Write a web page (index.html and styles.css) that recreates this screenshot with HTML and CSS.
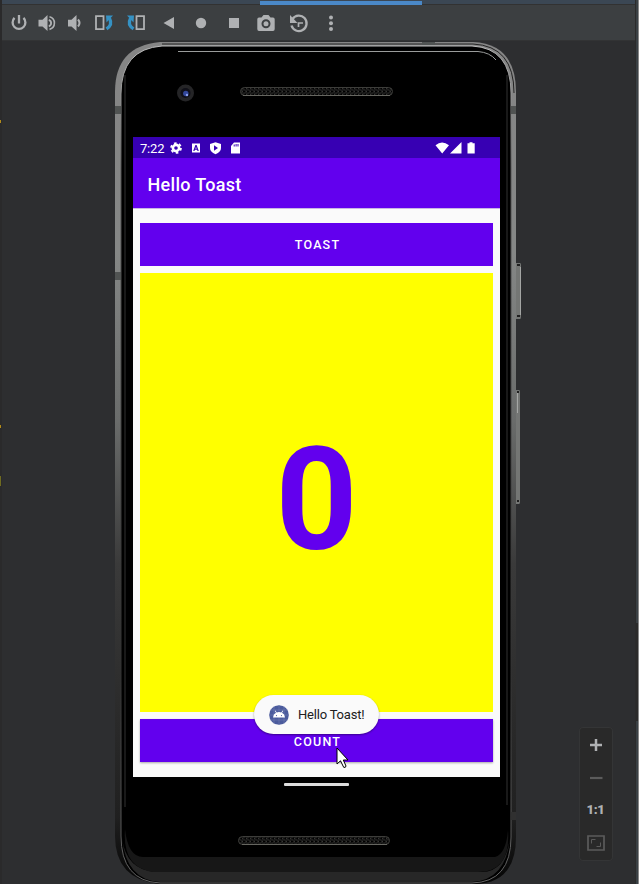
FILE: index.html
```html
<!DOCTYPE html>
<html lang="en">
<head>
<meta charset="utf-8">
<title>Emulator</title>
<link rel="stylesheet" href="styles.css">
</head>
<body>
<div class="window">
  <div class="tabs"><span class="tab-active"></span></div>
  <header class="toolbar">
    <svg viewBox="0 0 340 35" width="340" height="35">
      <g fill="none" stroke="#afb1b3" stroke-width="2.3">
        <path d="M14.500 12.900a6.400 6.400 0 1 0 9 0M19 10v8.500"/>
        <path d="M49.500 11.800a6.500 6.500 0 0 1 0 12.600" stroke-width="1.600"/>
        <path d="M48.800 14.800a3.500 3.500 0 0 1 0 6.600" stroke-width="1.800"/>
        <path d="M78 14.500q3 3.500 0 7" stroke-width="2"/>
        <path d="M96 11.200h7.500v13H96zM136.500 11.200h7.500v13h-7.500z" stroke-width="1.800"/>
        <path d="M292.500 14a7.700 7.700 0 1 1-1 6.500" stroke-width="2.300"/>
        <path d="M298.500 22v-4h4.500" stroke-width="1.700"/>
      </g>
      <g fill="#afb1b3">
        <path d="M38.500 14.800h4l5-4.800v16l-5-4.600h-4zM68 14.800h3.500l5-4.800v16l-5-4.600H68zM163.500 18l10.500-6v12z"/>
        <circle cx="201" cy="18" r="5.200"/>
        <path d="M229 13h10v10h-10zM290 10v8h7.500z"/>
        <path fill-rule="evenodd" d="M259 12.500h2.500l2-2.500h5l2 2.500h2.500q1.700 0 1.700 1.700v9.800q0 2-1.700 2h-14q-1.700 0-1.700-2v-9.800q0-1.700 1.700-1.700zM266 14.200a4.500 4.500 0 1 0 0 9a4.500 4.500 0 0 0 0-9z"/>
        <circle cx="266" cy="18.700" r="2.500"/>
        <circle cx="331" cy="12.500" r="2"/><circle cx="331" cy="18.200" r="2"/><circle cx="331" cy="24" r="2"/>
      </g>
      <g fill="none" stroke="#3592c4" stroke-width="3.200">
        <path d="M106.500 23.800q6.500-4 3-10.500M133.500 23.800q-6.500-4-3-10.500"/>
      </g>
      <path fill="#3592c4" d="M106 10.500h7l-6.500 7zM134 10.500h-7l6.500 7z"/>
    </svg>
  </header>
  <main class="canvas">
    <section class="phone">
      <svg class="frame" viewBox="115 42 407 842" width="407" height="842">
        <defs>
          <linearGradient id="rim" gradientUnits="userSpaceOnUse" x1="0" y1="42" x2="0" y2="884">
            <stop offset="0" stop-color="#858585"/><stop offset=".25" stop-color="#858786"/><stop offset=".45" stop-color="#6a6c6b"/><stop offset=".62" stop-color="#3a3a3a"/><stop offset=".92" stop-color="#202020"/><stop offset="1" stop-color="#050505"/>
          </linearGradient>
          <linearGradient id="edge" gradientUnits="userSpaceOnUse" x1="0" y1="42" x2="0" y2="884">
            <stop offset="0" stop-color="#c0c0c0"/><stop offset=".15" stop-color="#555"/><stop offset=".75" stop-color="#333"/><stop offset="1" stop-color="#666"/>
          </linearGradient>
          <pattern id="mesh" width="4" height="6" patternUnits="userSpaceOnUse" y="88.500">
            <path d="M0 1l3 2-3 2M2 0l2 1.500M2 6l2-1.500" fill="none" stroke="#42423f" stroke-width=".9"/>
          </pattern>
        </defs>
        <path fill="#747674" d="M516 263h4q1 0 1 2v52q0 2-1 2h-4zM515 390h4q1 0 1 2v110q0 2-1 2h-4z"/>
        <path fill="#a4a6a4" d="M520 267h1v48h-1zM517 393h1v20h-1z"/>
        <path fill="#202020" d="M517 264h3v2h-3zM517 315h3v2h-3zM517 391h2v2h-2zM517 500h2v2h-2z"/>
        <path fill="url(#rim)" d="M160 42h313q43 2 43 50v745q0 47-42 47H159q-44-5-44-48V92q0-46 45-50z"/>
        <path fill="#000" stroke="url(#edge)" d="M162 46h310q39 2 39 47v744q0 45-39 46H160q-39-2-39-47V94q0-45 41-48z"/>
        <path fill="none" stroke="#222" d="M162 44h311q41 2 41 49"/>
        <path fill="#272727" d="M122 838q4 42 38 44h312q34-2 38-44q-5 34-28 34H156q-30-2-34-34z"/>
        <path fill="#171717" d="M125 829q3 28 18 28h352q11-3 13-27q3 42-30 42H153q-31-4-28-43z"/>
        <path fill="#191919" d="M124 75h2v732h-2zM506 75h2v730h-2z"/>
        <path fill="none" stroke="#9a9c9b" d="M178 51.500h300q12 1 18 8.500"/>
        <path fill="#505352" d="M115 106h6v8h-6zM511 106h5v8h-5zM422 42h13v3h-13zM115 272h6v8h-6z"/>
        <path fill="#303030" d="M511 812h5v8h-5z"/>
        <circle cx="185.500" cy="93" r="8.500" fill="#252527"/><circle cx="185.500" cy="93" r="5" fill="#101018"/>
        <circle cx="185.800" cy="93.500" r="2.700" fill="#33489c"/><circle cx="187" cy="95" r="1.200" fill="#8ca0ef"/>
        <rect x="240.500" y="87.500" width="152" height="8" rx="4" fill="url(#mesh)" stroke="#3d3d3a"/>
        <rect x="238.500" y="836.500" width="151" height="8" rx="4" fill="url(#mesh)" stroke="#3d3d3a"/>
        <path stroke="#666660" d="M243 95.500h147M242 844.500h145"/>
      </svg>
      <div class="screen">
        <div class="status">
          <span class="time">7:22</span>
          <svg class="notices" viewBox="0 0 76 16" width="76" height="16" fill="#fff">
            <circle cx="8" cy="8" r="3.100" fill="none" stroke="#fff" stroke-width="2.600"/>
            <circle cx="8" cy="8" r="4.900" fill="none" stroke="#fff" stroke-width="1.900" stroke-dasharray="2.560 2.560"/>
            <path fill-rule="evenodd" d="M24 3.500h8v9h-8zM27.400 5l-2.200 6h1.300l.4-1.200h2.200l.4 1.200h1.300L28.600 5zM28 6.800l.6 1.900h-1.200z"/>
            <path fill-rule="evenodd" d="M47.500 2.200L53 4v4q0 4-5.500 6.200Q42 12 42 8V4zM46 5.200v5.600l4-2.800z"/>
            <path fill-rule="evenodd" d="M66 2.500h6v11h-9V6zM65.700 4.500v2h1v-2zm1.900-.5v2.500h1V4zm1.900 0v2.500h1V4z"/>
          </svg>
          <svg class="signals" viewBox="0 0 42 14" width="42" height="14" fill="#fff">
            <path d="M.5 4.200q6.500-5.500 13.500 0L7.200 12.500zM26.500 1v11.500H15zM32.500 2.300h2V1.300h3v1h2.200v10.200h-7.200z"/>
          </svg>
        </div>
        <div class="appbar">Hello Toast</div>
        <div class="content">
          <div class="btn">TOAST</div>
          <div class="counter">0</div>
          <div class="btn btn-count">COUNT</div>
        </div>
        <div class="toast">
          <svg viewBox="0 0 20 20" width="20" height="20">
            <circle cx="10" cy="10" r="9.800" fill="#4b5b9d"/>
            <path d="M5 1v18M10 0v20M15 1v18M1 5h18M0 10h20M1 15h18" stroke="#7480b2" stroke-width=".5"/>
            <path fill="#fff" d="M4 12.500q.3-3.500 3-4.700L5.800 5.900l.6-.4 1.300 2q2.300-.8 4.600 0l1.300-2 .6.400L13 7.800q2.700 1.200 3 4.700z"/>
            <circle cx="7.500" cy="10.600" r=".6" fill="#4b5b9d"/><circle cx="12.500" cy="10.600" r=".6" fill="#4b5b9d"/>
          </svg>
          <span>Hello Toast!</span>
        </div>
        <svg class="pointer" viewBox="0 0 13 22" width="13" height="22">
          <path d="M1 1v16l3.500-3.200 3.200 6.500q2 .8 2.300-1.300l-2.700-6H12z" fill="#fff" stroke="#000"/>
        </svg>
      </div>
      <div class="home"></div>
    </section>
  </main>
  <aside class="zoom">
    <svg viewBox="0 0 34 134" width="34" height="134">
      <path d="M17 12v12M11 18h12" stroke="#afb1b3" stroke-width="2.500"/>
      <path d="M11 51h12.500" stroke="#5b5b5b" stroke-width="2.200"/>
      <path d="M9 109h16v14H9z" fill="none" stroke="#5b5b5b" stroke-width="1.700"/>
      <path d="M12.500 116.500v-4h4M21.500 115.500v4h-4" fill="none" stroke="#5b5b5b"/>
    </svg>
    <span class="ratio">1:1</span>
  </aside>
  <div class="gutter"><i class="m1"></i><i class="m2"></i><i class="m3"></i></div>
  <div class="rail"></div>
</div>
</body>
</html>
```
FILE: styles.css
```css
* { box-sizing: border-box; }
body { margin: 0; overflow: hidden; font-family: Roboto, sans-serif; }
svg { display: block; }
.window { position: relative; width: 639px; height: 884px; background: #2d2e30; overflow: hidden; display: flex; flex-direction: column; }
.tabs { height: 5px; background: #3b4754; border-bottom: 1px solid #323232; padding: 1px 0 0 260px; flex: none; }
.tab-active { display: block; width: 162px; height: 4px; background: #4a88c7; }
.toolbar { height: 36px; background: #3c3f41; border-bottom: 1px solid #323334; flex: none; }
.canvas { padding: 1px 0 0 115px; }
.phone { position: relative; width: 401px; height: 842px; padding: 95px 0 0 18px; }
.frame { position: absolute; left: 0; top: 0; }
.screen { position: relative; width: 367px; height: 640px; background: #fafafa; display: flex; flex-direction: column; }
.status { height: 21px; background: #3700b3; color: #fff; display: flex; align-items: center; padding: 1px 23px 0 7px; }
.time { width: 28px; font-size: 13px; letter-spacing: -.2px; line-height: 20px; padding-top: 1px; }
.signals { margin-left: auto; }
.appbar { height: 51px; background: #6200ee; color: #fff; font-size: 18px; font-weight: 500; line-height: 53px; padding-left: 14.500px; letter-spacing: .3px; border-bottom: 1px solid #c9b6e4; }
.content { flex: 1; display: flex; flex-direction: column; gap: 7px; padding: 14px 7px 15px; }
.btn { height: 43px; flex: none; background: #6200ee; color: #fff; font-size: 12.500px; font-weight: 500; letter-spacing: 1.200px; line-height: 44px; text-align: center; padding-left: 2px; }
.btn-count { line-height: 46px; box-shadow: 0 1px 2px #0005; }
.counter { flex: 1; min-height: 0; background: #ff0; color: #6200ee; display: flex; align-items: center; justify-content: center; font-size: 143px; font-weight: 700; line-height: 1; padding-top: 15px; }
.toast { position: absolute; left: 121px; top: 558px; width: 125px; height: 39px; border-radius: 20px; background: #fafafa; display: flex; align-items: center; gap: 9.500px; padding-left: 14.500px; font-size: 13px; letter-spacing: -.2px; color: #202020; white-space: nowrap; box-shadow: 0 1px 2px #0006; }
.pointer { position: absolute; left: 203px; top: 610px; }
.home { position: relative; width: 65px; height: 3px; margin: 6px 0 0 151px; border-radius: 1px; background: #ddd; }
.zoom { position: absolute; left: 579px; top: 727px; width: 34px; height: 134px; background: #292929; border-radius: 4px; box-shadow: inset 0 0 0 1px #343536; }
.ratio { position: absolute; left: 0; top: 75px; width: 33px; text-align: center; color: #afb1b3; font-size: 13px; font-weight: 900; letter-spacing: -.3px; line-height: 16px; }
.gutter { position: absolute; left: 0; top: 0; width: 2px; height: 884px; background: #2a2a2b; }
.gutter i { position: absolute; left: 0; width: 1px; height: 3px; background: #b28b19; }
.m1 { top: 120px; }
.m2 { top: 425px; }
.gutter .m3 { top: 476px; height: 10px; background: #6f6b20; }
.rail { position: absolute; right: 0; top: 0; width: 4px; height: 884px; background: linear-gradient(#2b2b2b 0 0) 0 0 / 1px 100% no-repeat, linear-gradient(#3a4044 0 623px, #2b2b2b 623px 721px, #3a4044 721px); border-right: 1px solid #888; }
```
